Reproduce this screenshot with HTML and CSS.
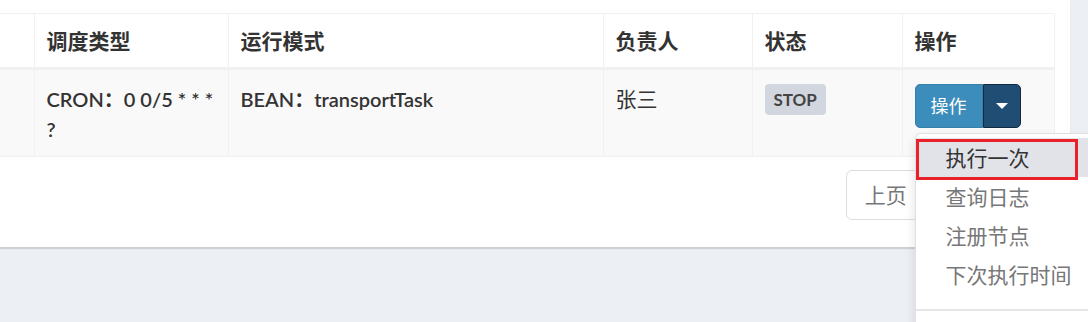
FILE: index.html
```html
<!DOCTYPE html>
<html lang="zh">
<head>
<meta charset="utf-8">
<title>任务列表</title>
<link rel="stylesheet" href="styles.css">
</head>
<body>
<div class="page">
  <div class="card">
    <table class="grid">
      <colgroup>
        <col class="c0"><col class="c1"><col class="c2"><col class="c3"><col class="c4"><col class="c5">
      </colgroup>
      <thead>
        <tr><th></th><th>调度类型</th><th>运行模式</th><th>负责人</th><th>状态</th><th>操作</th></tr>
      </thead>
      <tbody>
        <tr>
          <td></td>
          <td>CRON：0 0/5 * * * ?</td>
          <td>BEAN：transportTask</td>
          <td class="plain">张三</td>
          <td><span class="badge">STOP</span></td>
          <td>
            <div class="btn-group">
              <button class="btn btn-main">操作</button>
              <button class="btn btn-toggle"><span class="caret"></span></button>
              <ul class="menu">
                <li class="active">执行一次</li>
                <li>查询日志</li>
                <li>注册节点</li>
                <li>下次执行时间</li>
                <li class="divider"></li>
                <div class="mark"></div>
              </ul>
            </div>
          </td>
        </tr>
      </tbody>
    </table>
    <div class="pager">
      <a class="pg">上页</a>
      <a class="pg">1</a>
      <a class="pg">下页</a>
    </div>
  </div>
</div>
</body>
</html>
```
FILE: styles.css
```css
html { overflow: hidden; }
body {
  margin: 0;
  background: #ecf0f5;
  font-family: "Lato", "Noto Sans CJK SC", sans-serif;
  color: #333;
}
.page { width: 1088px; height: 322px; overflow: hidden; }
.card {
  width: 1070px;
  background: #fff;
  padding: 13px 16px 27px 0;
  box-sizing: border-box;
  box-shadow: 0 2px 1px rgba(0,0,0,0.13);
}
.grid {
  width: 1054px;
  border-collapse: collapse;
  table-layout: fixed;
  font-size: 21px;
  line-height: 30px;
}
.c0 { width: 34px; }
.c1 { width: 194px; }
.c2 { width: 375px; }
.c3 { width: 149px; }
.c4 { width: 150px; }
.c5 { width: 152px; }
.grid th, .grid td {
  border: 1px solid #f1f1f1;
  text-align: left;
  vertical-align: top;
}
.grid th:first-child, .grid td:first-child { border-left: none; }
.grid th {
  padding: 12px 12px 11px;
  font-weight: 700;
  border-bottom: 3px solid #f1f1f1;
}
.grid td {
  padding: 14px 12px 12px;
  font-size: 20px;
  font-weight: 600;
  background: #f9f9f9;
}
.grid td.plain { font-weight: 400; font-size: 21px; }
.badge {
  display: inline-block;
  vertical-align: top;
  background: #d2d6de;
  color: #444;
  font-size: 17px;
  font-weight: 700;
  line-height: 21px;
  padding: 5px 9px;
  border-radius: 4px;
}
.btn-group {
  position: relative;
  display: inline-flex;
  vertical-align: top;
}
.btn {
  font-family: inherit;
  font-size: 18px;
  line-height: 26px;
  height: 44px;
  padding: 0 15px;
  color: #fff;
  cursor: pointer;
}
.btn-main {
  background: #3c8dbc;
  border: 1px solid #367fa9;
  border-radius: 5px 0 0 5px;
  font-weight: 400;
}
.btn-toggle {
  background: #204d74;
  border: 1px solid #122b40;
  border-radius: 0 5px 5px 0;
  width: 38px;
  padding: 0;
  display: flex;
  align-items: center;
  justify-content: center;
}
.caret {
  display: block;
  width: 0;
  height: 0;
  border-top: 6px solid #fff;
  border-left: 6px solid transparent;
  border-right: 6px solid transparent;
}
.menu {
  position: absolute;
  top: 49px;
  left: 0;
  z-index: 10;
  width: 200px;
  margin: 0;
  padding: 4px 0 40px;
  list-style: none;
  background: #fff;
  border: 1px solid rgba(0,0,0,0.12);
  border-radius: 6px 0 0 0;
  box-shadow: 0 6px 12px rgba(0,0,0,0.12);
  font-weight: 400;
}
.menu li {
  padding: 4.5px 30px;
  line-height: 30px;
  font-size: 21px;
  color: #777;
  white-space: nowrap;
}
.menu li.active { background: #e1e3e9; color: #333; }
.menu li.divider {
  height: 2px;
  padding: 0;
  margin: 15px 0;
  background: #e5e5e5;
}
.mark {
  position: absolute;
  left: 0;
  top: 5px;
  width: 162px;
  height: 41px;
  box-sizing: border-box;
  border: 3px solid #e8212b;
}
.pager {
  display: flex;
  justify-content: flex-end;
  margin-top: 13px;
}
.pg {
  display: block;
  padding: 9px 18px;
  line-height: 30px;
  font-size: 21px;
  color: #777;
  border: 1px solid #ddd;
  margin-left: -1px;
}
.pg:first-child { border-radius: 6px 0 0 6px; }
.pg:last-child { border-radius: 0 6px 6px 0; }
```
